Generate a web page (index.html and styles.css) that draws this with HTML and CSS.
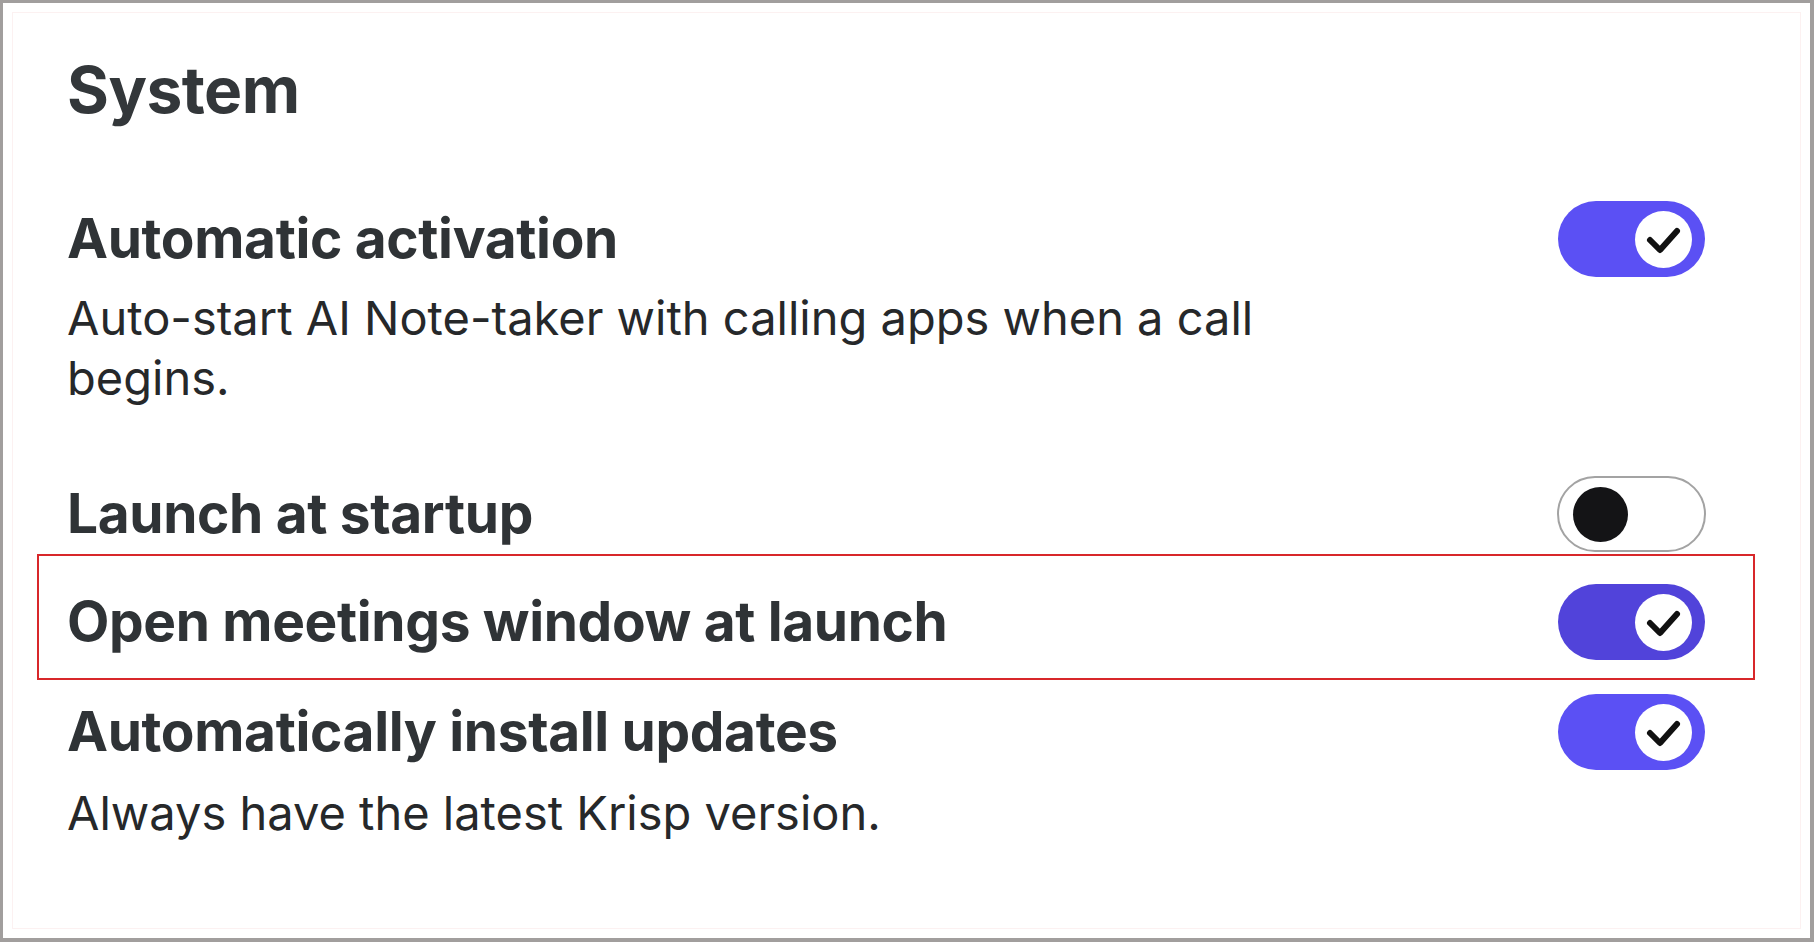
FILE: index.html
```html
<!DOCTYPE html>
<html lang="en">
<head>
<meta charset="utf-8">
<title>System settings</title>
<link rel="stylesheet" href="styles.css">
</head>
<body>
<div class="window">
  <div class="frame">
    <h1 class="title">System</h1>

    <div class="row row-first">
      <div class="info">
        <div class="label">Automatic activation</div>
        <div class="desc">Auto-start AI Note-taker with calling apps when a call begins.</div>
      </div>
      <div class="toggle on">
        <span class="knob"><svg viewBox="0 0 57 57" width="57" height="57"><path d="M15 29 L25 39 L42 20" fill="none" stroke="#111" stroke-width="6" stroke-linecap="round" stroke-linejoin="round"/></svg></span>
      </div>
    </div>

    <div class="row row-second">
      <div class="info">
        <div class="label">Launch at startup</div>
      </div>
      <div class="toggle off">
        <span class="knob"></span>
      </div>
    </div>

    <div class="highlight">
      <div class="row">
        <div class="info">
          <div class="label">Open meetings window at launch</div>
        </div>
        <div class="toggle on dark">
          <span class="knob"><svg viewBox="0 0 57 57" width="57" height="57"><path d="M15 29 L25 39 L42 20" fill="none" stroke="#111" stroke-width="6" stroke-linecap="round" stroke-linejoin="round"/></svg></span>
        </div>
      </div>
    </div>

    <div class="row row-last">
      <div class="info">
        <div class="label">Automatically install updates</div>
        <div class="desc desc-last">Always have the latest Krisp version.</div>
      </div>
      <div class="toggle on">
        <span class="knob"><svg viewBox="0 0 57 57" width="57" height="57"><path d="M15 29 L25 39 L42 20" fill="none" stroke="#111" stroke-width="6" stroke-linecap="round" stroke-linejoin="round"/></svg></span>
      </div>
    </div>
  </div>
</div>
</body>
</html>
```

FILE: styles.css
```css
* { box-sizing: border-box; }

html, body {
  margin: 0;
  height: 942px;
}

body {
  background: #a19e9d;
  padding: 3px 4px 4px 3px;
  font-family: Inter, "Noto Sans", "Liberation Sans", sans-serif;
  overflow: hidden;
}

.window {
  background: #ffffff;
  height: 935px;
  padding: 9px;
}

.frame {
  height: 100%;
  border: 1px solid #fcf1f1;
  padding: 45px 95px 0 54px;
}

.title {
  margin: 0;
  font-size: 64px;
  line-height: 64px;
  font-weight: 700;
  color: #33373a;
  letter-spacing: -0.5px;
}

.row {
  display: flex;
  justify-content: space-between;
  align-items: flex-start;
}

.row-first { margin-top: 78px; }
.row-second { margin-top: 67px; }
.row-last { margin-top: 13px; }

.info {
  flex: 1;
  min-width: 0;
}

.label {
  font-size: 55px;
  line-height: 76px;
  font-weight: 700;
  color: #2f3336;
  letter-spacing: -0.35px;
}

.desc {
  margin-top: 12px;
  max-width: 1230px;
  font-size: 47px;
  line-height: 60px;
  font-weight: 400;
  color: #26282a;
}

.desc-last { margin-top: 14px; }

.highlight {
  margin: 2px -50px 0 -30px;
  border: 2px solid #d8272a;
  padding: 27px 48px 18px 28px;
}

.toggle {
  flex: none;
  position: relative;
  width: 147px;
  height: 76px;
  border-radius: 38px;
  margin-top: 1px;
}

.toggle.on { background: #5b50f4; }
.toggle.on.dark { background: #5143da; }

.toggle.on .knob {
  position: absolute;
  right: 13px;
  top: 9.5px;
  width: 57px;
  height: 57px;
  border-radius: 50%;
  background: #ffffff;
  display: block;
}

.toggle.on .knob svg { display: block; }

.toggle.off {
  background: #ffffff;
  border: 2px solid #a3a3a3;
  width: 149px;
  margin-right: -1px;
}

.toggle.off .knob {
  position: absolute;
  left: 14px;
  top: 9px;
  width: 55px;
  height: 55px;
  border-radius: 50%;
  background: #141416;
}
```
